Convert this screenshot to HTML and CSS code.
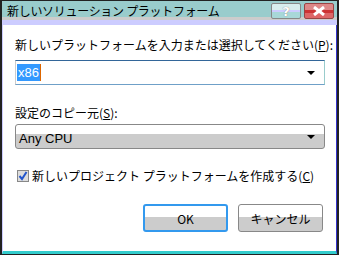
FILE: index.html
```html
<!DOCTYPE html>
<html lang="ja">
<head>
    <meta charset="UTF-8">
    <title>新しいソリューション プラットフォーム</title>
    <link rel="stylesheet" href="styles.css">
</head>
<body>
    <div class="window">
        <div class="titlebar">
            <span class="title">新しいソリューション プラットフォーム</span>
            <div class="caption-buttons">
                <div class="cap-btn help">?</div>
                <div class="cap-btn close">
                    <svg width="14" height="10" viewBox="0 0 14 10">
                        <path d="M2 1 L12 9 M12 1 L2 9" stroke="#fff" stroke-width="3"/>
                    </svg>
                </div>
            </div>
        </div>
        <div class="content">
            <div class="label">新しいプラットフォームを入力または選択してください(<u>P</u>):</div>
            <div class="combo edit">
                <span class="sel">x86</span><span class="caret"></span>
                <span class="arrow"></span>
            </div>
            <div class="label second">設定のコピー元(<u>S</u>):</div>
            <div class="combo list">
                <span class="value">Any CPU</span>
                <span class="arrow"></span>
            </div>
            <div class="check-row">
                <span class="checkbox">
                    <svg width="10" height="10" viewBox="0 0 10 10">
                        <path d="M1.5 5 L4 8 L8.5 1" stroke="#2255cc" stroke-width="2" fill="none"/>
                    </svg>
                </span>
                <span>新しいプロジェクト プラットフォームを作成する(<u>C</u>)</span>
            </div>
            <div class="buttons">
                <button class="btn default">OK</button>
                <button class="btn">キャンセル</button>
            </div>
        </div>
    </div>
</body>
</html>
```
FILE: styles.css
```css
* {
    box-sizing: border-box;
    margin: 0;
    padding: 0;
}
body {
    background: #fff;
    font-family: "Noto Sans CJK JP", "Liberation Sans", sans-serif;
    font-size: 12px;
    color: #000;
}
.window {
    width: 339px;
    height: 255px;
    border: 1px solid #222;
    border-left-width: 2px;
    border-right-width: 2px;
    background: #fff;
    display: flex;
    flex-direction: column;
}
.titlebar {
    height: 24px;
    background: #99cccc;
    border-bottom: 5px solid #ccccff;
    box-shadow: inset 0 -3px 0 #cccccc;
    display: flex;
    justify-content: space-between;
    align-items: flex-start;
}
.title {
    font-size: 12px;
    line-height: 14px;
    padding: 3px 0 0 5px;
    letter-spacing: -0.3px;
}
.caption-buttons {
    display: flex;
    gap: 3px;
    padding: 2px 3px 0 0;
}
.cap-btn {
    width: 30px;
    height: 16px;
    border: 1px solid #888;
    border-radius: 2px;
    display: flex;
    justify-content: center;
    align-items: center;
    font-family: "DejaVu Sans", sans-serif;
    font-weight: bold;
    font-size: 13px;
    color: #fff;
    text-shadow: 0 0 1px #666;
}
.help {
    background: linear-gradient(#d8eeee 0, #d8eeee 40%, #ccccff 40%, #ccccff 60%, #a8d8d8 60%);
}
.close {
    background: linear-gradient(#dd8888 0, #dd8888 40%, #cc3333 40%, #cc3333 65%, #dd6666 65%);
    border-color: #994444;
}
.content {
    flex: 1;
    padding: 12px 12px 0 12px;
    border-left: 1px solid #ccccff;
    border-right: 1px solid #3333cc;
    border-bottom: 3px solid #33cccc;
}
.label {
    line-height: 16px;
    height: 16px;
    white-space: nowrap;
}
.label.second {
    margin-top: 20px;
}
.combo {
    position: relative;
    height: 25px;
    width: 310px;
    margin-top: 6px;
    display: flex;
    align-items: center;
    font-family: "Liberation Sans", sans-serif;
    font-size: 13px;
}
.edit {
    border: 1px solid #6fa0c8;
    border-top-color: #336699;
    border-left-color: #cccccc;
    border-right-color: #99cccc;
    margin-top: 7px;
    padding-left: 1px;
}
.sel {
    background: #3399ff;
    color: #fff;
    line-height: 17px;
    padding: 0 1px;
}
.caret {
    width: 1px;
    height: 17px;
    background: #dd6600;
}
.list {
    border: 1px solid #888;
    border-radius: 3px;
    background: linear-gradient(#fff 0, #fff 38%, #cccccc 38%);
    margin-top: 3px;
    padding-left: 3px;
    padding-top: 3px;
}
.arrow {
    position: absolute;
    right: 9px;
    top: 10px;
    width: 0;
    height: 0;
    border-left: 4px solid transparent;
    border-right: 4px solid transparent;
    border-top: 4px solid #000;
}
.check-row {
    margin-top: 19px;
    display: flex;
    align-items: center;
    gap: 3px;
    padding-left: 2px;
    line-height: 16px;
}
.checkbox {
    width: 12px;
    height: 12px;
    border: 1px solid #888;
    background: #dddddd;
    display: flex;
    justify-content: center;
    align-items: center;
}
.buttons {
    display: flex;
    justify-content: flex-end;
    gap: 10px;
    margin-top: 20px;
    padding-right: 1px;
}
.btn {
    width: 85px;
    height: 28px;
    border: 1px solid #888;
    border-radius: 3px;
    background: linear-gradient(#fff 0, #fff 45%, #cccccc 45%);
    font-family: "Noto Sans CJK JP", "Liberation Sans", sans-serif;
    font-size: 12px;
    color: #000;
}
.btn.default {
    border: 2px solid #3399ee;
}
```
